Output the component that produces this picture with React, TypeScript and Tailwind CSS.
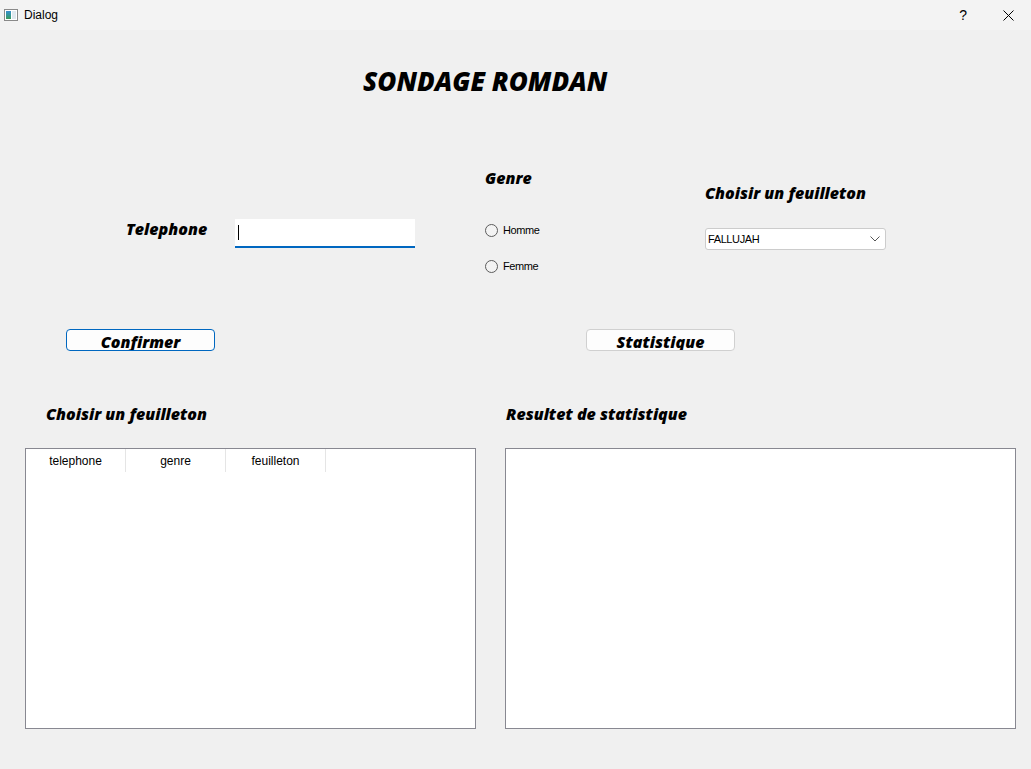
import React from 'react';

const heading = "font-['Open_Sans',sans-serif] font-extrabold italic text-black";
const ui = "font-['Liberation_Sans',Arial,sans-serif]";

function Radio({ label }: { label: string }) {
  return (
    <label className={`flex items-center gap-[5px] h-[14px] ${ui} text-[11px] text-black tracking-[-0.4px]`}>
      <span className="w-[13px] h-[13px] rounded-full border border-[#5c5c5c] bg-[#f3f3f3]" />
      {label}
    </label>
  );
}

export default function App() {
  const cols = ['telephone', 'genre', 'feuilleton'];

  return (
    <div className="w-[1031px] h-[769px] bg-[#f0f0f0] flex flex-col overflow-hidden">
      {/* barre de titre */}
      <div className={`h-[30px] bg-[#f3f3f3] flex items-center ${ui} text-[12px] text-black`}>
        <div className="ml-[4px] w-[14px] h-[12px] border border-[#8a8a8a] bg-white flex p-[1px] gap-[1px]">
          <span className="w-[5px] h-full bg-gradient-to-b from-[#3a8fd0] to-[#3b9a5a]" />
          <span className="flex-1 h-full bg-[#dfe8ef]" />
        </div>
        <span className="ml-[6px]">Dialog</span>
        <span className="ml-auto mr-[36px] text-[14px]">?</span>
        <svg width="11" height="11" viewBox="0 0 11 11" className="mr-[17px]">
          <path d="M0.5 0.5 L10.5 10.5 M10.5 0.5 L0.5 10.5" stroke="#000" strokeWidth="1" />
        </svg>
      </div>

      {/* titre */}
      <div className={`mt-[36px] h-[30px] leading-[30px] pl-[363px] text-[26px] ${heading}`}>
        SONDAGE ROMDAN
      </div>

      {/* formulaire */}
      <div className="mt-[69px] h-[115px] flex items-start">
        <div className="ml-[126px] mt-[54px] flex items-center">
          <span className={`w-[109px] -mt-[10px] text-[16px] leading-[20px] ${heading}`}>Telephone</span>
          <div className="w-[180px] h-[29px] bg-white border-b-2 border-[#0067c0] flex items-center pl-[3px]">
            <span className="w-[1px] h-[15px] bg-black" />
          </div>
        </div>

        <div className="ml-[70px] mt-[3px] w-[120px] flex flex-col">
          <span className={`h-[20px] text-[16px] leading-[20px] ${heading}`}>Genre</span>
          <div className="mt-[35px] flex flex-col gap-[22px]">
            <Radio label="Homme" />
            <Radio label="Femme" />
          </div>
        </div>

        <div className="ml-[100px] mt-[18px] flex flex-col">
          <span className={`h-[20px] text-[16px] leading-[20px] ${heading}`}>Choisir un feuilleton</span>
          <div className="mt-[25px] w-[181px] h-[22px] bg-white border border-[#cccccc] rounded-[3px] flex items-center pl-[2px] pr-[5px]">
            <span className={`${ui} text-[11px] text-black tracking-[-0.4px]`}>FALLUJAH</span>
            <svg width="10" height="6" viewBox="0 0 10 6" className="ml-auto">
              <path d="M0.5 0.5 L5 5 L9.5 0.5" stroke="#555" fill="none" strokeWidth="1" />
            </svg>
          </div>
        </div>
      </div>

      {/* boutons */}
      <div className="mt-[49px] flex">
        <button className={`ml-[66px] w-[149px] h-[22px] bg-[#fdfdfd] border border-[#0067c0] rounded-[4px] overflow-hidden flex items-center justify-center pt-[3px] text-[16px] leading-[20px] ${heading}`}>
          Confirmer
        </button>
        <button className={`ml-[371px] w-[149px] h-[22px] bg-[#fdfdfd] border border-[#d0d0d0] rounded-[4px] overflow-hidden flex items-center justify-center pt-[3px] text-[16px] leading-[20px] ${heading}`}>
          Statistique
        </button>
      </div>

      {/* libellés */}
      <div className="mt-[53px] h-[20px] flex items-center">
        <span className={`w-[506px] pl-[46px] text-[16px] leading-[20px] ${heading}`}>Choisir un feuilleton</span>
        <span className={`text-[16px] leading-[20px] ${heading}`}>Resultet de statistique</span>
      </div>

      {/* tableaux */}
      <div className="mt-[24px] flex">
        <div className="ml-[25px] w-[451px] h-[281px] bg-white border border-[#888891]">
          <div className="flex h-[23px]">
            {cols.map((c) => (
              <div key={c} className={`w-[100px] border-r border-[#e5e5e5] flex items-center justify-center ${ui} text-[12px] text-black`}>
                {c}
              </div>
            ))}
          </div>
        </div>
        <div className="ml-[29px] w-[511px] h-[281px] bg-white border border-[#888891]" />
      </div>
    </div>
  );
}
